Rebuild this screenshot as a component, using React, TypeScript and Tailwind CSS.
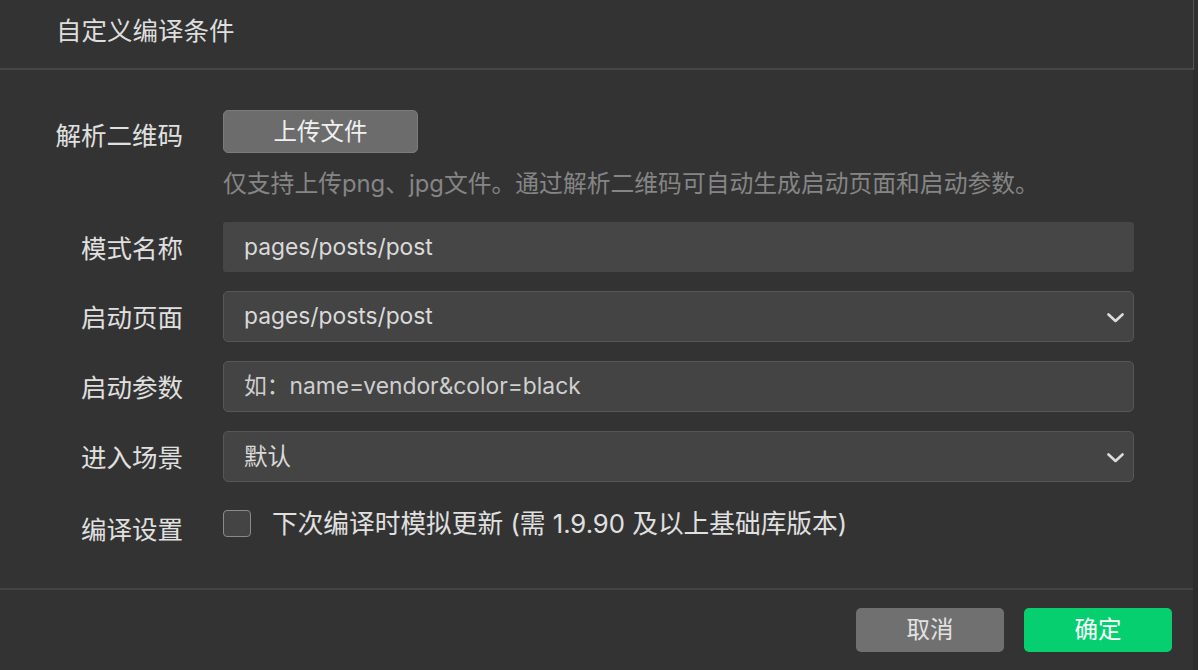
import React from 'react';

const font = { fontFamily: 'Inter, "Noto Sans CJK SC", sans-serif' };

const Chevron = () => (
  <svg width="17" height="10" viewBox="0 0 17 10" fill="none">
    <polyline points="1.5,1.5 8.5,8 15.5,1.5" stroke="#dcdcdc" strokeWidth="2.6" strokeLinecap="round" strokeLinejoin="round" />
  </svg>
);

interface RowProps {
  label: string;
  labelOffset?: string;
  children: React.ReactNode;
  className?: string;
}

const Row: React.FC<RowProps> = ({ label, labelOffset = 'pt-[14px]', children, className = '' }) => (
  <div className={`flex items-start ${className}`}>
    <div className={`w-[183px] shrink-0 text-right text-[25.5px] leading-[26px] text-[#e0e0e0] ${labelOffset}`}>
      {label}
    </div>
    <div className="ml-[40px] mr-[59px] flex-1">{children}</div>
  </div>
);

export default function App() {
  return (
    <div className="flex h-[670px] w-[1198px] overflow-hidden bg-[#333333]" style={font}>
      <div className="flex w-[1193px] flex-col">
        <div className="flex h-[70px] items-start border-b-2 border-[#464646] pl-[56px] pt-[18px]">
          <span className="text-[25.5px] leading-[26px] text-[#dedede]">自定义编译条件</span>
        </div>

        <div className="flex h-[518px] flex-col pt-[40px]">
          <Row label="解析二维码" labelOffset="pt-[13px]">
            <button className="h-[43px] w-[195px] rounded-[5px] border border-[#7c7c7c] bg-[#6c6c6c] text-[23.5px] text-[#f0f0f0]">
              上传文件
            </button>
            <div className="mt-[18px] text-[23.8px] leading-[25px] text-[#858585]">
              仅支持上传png、jpg文件。通过解析二维码可自动生成启动页面和启动参数。
            </div>
          </Row>

          <Row label="模式名称" className="mt-[26px]">
            <div className="flex h-[50px] items-center rounded-[3px] bg-[#464646] pl-[21px] text-[22.8px] text-[#dadada]">
              pages/posts/post
            </div>
          </Row>

          <Row label="启动页面" className="mt-[19px]">
            <div className="flex h-[51px] items-center justify-between rounded-[5px] border border-[#575757] bg-[#444444] pl-[20px] pr-[9px] text-[22.8px] text-[#dadada]">
              <span>pages/posts/post</span>
              <span className="pt-[3px]">
                <Chevron />
              </span>
            </div>
          </Row>

          <Row label="启动参数" className="mt-[19px]">
            <div className="flex h-[51px] items-center rounded-[5px] border border-[#575757] bg-[#444444] pl-[20px] text-[22.8px] text-[#cfcfcf]">
              如：name=vendor&amp;color=black
            </div>
          </Row>

          <Row label="进入场景" className="mt-[19px]">
            <div className="flex h-[51px] items-center justify-between rounded-[5px] border border-[#575757] bg-[#444444] pl-[20px] pr-[9px] text-[23.5px] text-[#dadada]">
              <span>默认</span>
              <span className="pt-[3px]">
                <Chevron />
              </span>
            </div>
          </Row>

          <Row label="编译设置" labelOffset="pt-[7px]" className="mt-[28px]">
            <div className="flex items-center">
              <div className="h-[27px] w-[28px] rounded-[4px] border border-[#8a8a8a] bg-[#444444]" />
              <span className="ml-[21px] text-[25.7px] leading-[25px] text-[#e0e0e0]">
                下次编译时模拟更新 (需 1.9.90 及以上基础库版本)
              </span>
            </div>
          </Row>
        </div>

        <div className="flex flex-1 items-start justify-end gap-[20px] border-t-2 border-[#434343] pr-[21px] pt-[18px]">
          <button className="h-[44px] w-[148px] rounded-[5px] bg-[#707070] text-[23.5px] text-[#e2e2e2]">取消</button>
          <button className="h-[44px] w-[148px] rounded-[5px] bg-[#05cf6f] text-[23.5px] text-white">确定</button>
        </div>
      </div>
      <div className="flex w-[5px] flex-col">
        <div className="h-[70px] border-l border-[#545454] bg-[#303030]" />
        <div className="flex-1 bg-[#2d2d2d]" />
      </div>
    </div>
  );
}
